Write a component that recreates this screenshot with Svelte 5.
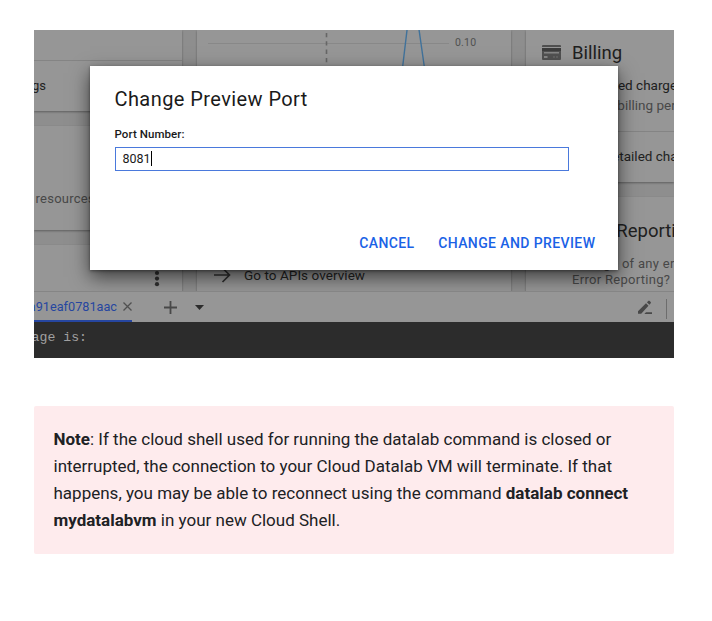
<script>
  let port = '8081';
</script>

<main>
  <section class="shot">
    <div class="dashboard">
      <div class="col left">
        <div class="card c1"><div class="blank"></div><div class="link"><span class="clip settings">Go to project settings</span></div></div>
        <div class="card c2"><span class="resources">resources</span></div>
        <div class="card c3">
          <svg width="6" height="18" viewBox="0 0 6 18" fill="#303030"><circle cx="3" cy="3" r="2.1"/><circle cx="3" cy="8.6" r="2.1"/><circle cx="3" cy="14.2" r="2.1"/></svg>
        </div>
      </div>
      <div class="col middle">
        <div class="card apis">
          <div class="chart">
            <svg width="250" height="60" viewBox="0 0 250 60" fill="none">
              <path d="M0 13.500H241" stroke="#888"/>
              <path d="M118.500 3V50" stroke="#666" stroke-width="1.6" stroke-dasharray="4.3 4"/>
              <path d="M194.500 38L199.500-4M216.500 38L210.500-4" stroke="#40729b" stroke-width="1.4"/>
            </svg>
            <span>0.10</span>
          </div>
          <div class="overview">
            <svg width="17" height="16" viewBox="0 0 17 16" fill="none" stroke="#303030" stroke-width="1.7"><path d="M0 8H15.500M8.500 1L15.500 8L8.500 15"/></svg>
            <span>Go to APIs overview</span>
          </div>
        </div>
      </div>
      <div class="col right">
        <div class="card billing">
          <div class="head">
            <svg width="19" height="16" viewBox="0 0 19 16"><path fill="#505050" d="M0 1Q0 0 1 0H18Q19 0 19 1V2H0z"/><path fill="#3d3d3d" d="M0 3H19V6H0z"/><path fill="#505050" d="M0 6H19V14Q19 15 18 15H1Q0 15 0 14z"/><path fill="#858585" d="M2 7H17V8.500H2zM2 11H5.500V13H2z"/><path fill="#707070" d="M11 11.500H13V12.500H11zM14 11.500H16V12.500H14z"/></svg>
            <h3>Billing</h3>
          </div>
          <p class="dark">Estimated charges</p>
          <p>For the billing period</p>
          <div class="detail">View detailed charges</div>
        </div>
        <div class="card errors">
          <h3>Error Reporting</h3>
          <p>No sign of any errors.</p>
          <p>Error Reporting?</p>
        </div>
      </div>
    </div>

    <div class="tabs">
      <div class="tab">
        <span class="clip name">a91eaf0781aac</span>
        <svg width="9" height="9" viewBox="0 0 9 9" stroke="#505050" stroke-width="1.3"><path d="M.5.5L8.500 8.500M8.500.5L.5 8.500"/></svg>
      </div>
      <svg class="plus" width="13" height="13" viewBox="0 0 13 13" stroke="#484848" stroke-width="1.8"><path d="M6.500 0V13M0 6.500H13"/></svg>
      <svg class="caret" width="9" height="5" viewBox="0 0 9 5" fill="#2c2c2c"><path d="M0 0H9L4.500 5z"/></svg>
      <svg class="pen" width="16" height="15" viewBox="0 0 16 15" fill="#484848"><path d="M1 11.200L9 3.200L11.500 5.700L4.200 13.800H1zM9.900 2.300L11.300.9Q12 .3 12.700 1L13.700 2Q14.300 2.700 13.700 3.300L12.400 4.800zM9 12.300H15V14H7.400z"/></svg>
      <i class="sep"></i>
    </div>
    <div class="terminal"><span class="clip">age is:</span></div>

    <div class="dialog" role="dialog" aria-label="Change Preview Port">
      <h2>Change Preview Port</h2>
      <div class="label">Port Number:</div>
      <div class="input">{port}<i></i></div>
      <div class="actions"><span>CANCEL</span><span>CHANGE AND PREVIEW</span></div>
    </div>
  </section>

  <aside>
    <b>Note</b>: If the cloud shell used for running the datalab command is closed or interrupted, the connection to your Cloud Datalab VM will terminate. If that happens, you may be able to reconnect using the command <b>datalab connect mydatalabvm</b> in your new Cloud Shell.
  </aside>
</main>

<style>
  :global(body) { background: #fff; }
  * { box-sizing: border-box; }
  main { padding: 30px 38px 67px 34px; height: 621px; overflow: hidden; font-family: Roboto, sans-serif; color: #202124; }
  svg { display: block; flex: none; }
  h2, h3, p { margin: 0; font-weight: 400; }
  .shot { position: relative; width: 640px; height: 328px; overflow: hidden; background: #8e8e8e; display: flex; flex-direction: column; }
  .dashboard { height: 261px; display: flex; gap: 15px; overflow: hidden; }
  .col { display: flex; flex-direction: column; gap: 15px; }
  .left { width: 148px; }
  .middle { width: 314px; }
  .right { width: 148px; }
  .card { background: #969696; box-shadow: 0 1px 2px rgba(0, 0, 0, .34); flex: none; overflow: hidden; }
  .clip { display: flex; justify-content: flex-end; white-space: nowrap; overflow: hidden; }
  .c1 { height: 81px; }
  .blank { height: 31px; border-bottom: 1px solid #848484; }
  .link { padding-top: 17px; font-size: 13px; line-height: 16px; color: #222; }
  .settings { width: 12px; }
  .c2 { height: 104px; padding: 64px 0 0 1.500px; font-size: 13px; line-height: 18px; color: #484848; }
  .resources { letter-spacing: .25px; }
  .c3 { height: 60px; padding: 25px 0 0 120px; }
  .apis { height: 280px; display: flex; flex-direction: column; }
  .chart { height: 236px; padding-left: 11px; display: flex; }
  .chart span { margin: 6px 0 0 -3px; font-size: 10.500px; line-height: 14px; letter-spacing: .2px; color: #505050; }
  .overview { display: flex; align-items: center; gap: 13px; padding-left: 17px; height: 18px; font-size: 13.500px; letter-spacing: .06px; color: #222; white-space: nowrap; }
  .billing { height: 152px; }
  .head { display: flex; align-items: center; gap: 11px; padding: 11px 0 0 16px; height: 35px; }
  h3 { font-size: 18.500px; line-height: 24px; color: #202020; white-space: nowrap; }
  .billing p, .errors p { margin-left: 46px; font-size: 13.500px; line-height: 20px; color: #484848; white-space: nowrap; }
  .billing p.dark { margin-top: 10px; color: #202020; }
  .detail { margin-top: 16px; border-top: 1px solid #848484; padding: 15px 0 0 46px; font-size: 13.500px; line-height: 18px; color: #222; white-space: nowrap; }
  .errors { height: 110px; padding-top: 22px; }
  .errors h3 { margin-left: 46px; margin-bottom: 13px; }
  .errors p { font-size: 13px; line-height: 16px; letter-spacing: .3px; }
  .tabs { position: relative; z-index: 3; height: 31px; background: #969696; border-top: 1px solid #858585; display: flex; align-items: center; }
  .tab { width: 98px; height: 30px; border-bottom: 2px solid #2646a0; display: flex; align-items: center; gap: 6px; }
  .name { width: 83px; font-size: 12.700px; color: #2646a0; line-height: 20px; padding-top: 1px; }
  .plus { margin-left: 32px; }
  .caret { margin-left: 17.500px; }
  .pen { margin-left: 433px; }
  .sep { width: 1px; height: 20px; margin-left: 13px; margin-top: 3px; background: #6d6d6d; }
  .terminal { position: relative; z-index: 3; height: 36px; background: #2c2c2c; color: #a0a0a0; font: 13.200px/18px "Liberation Mono", monospace; padding-top: 7px; }
  .terminal .clip { width: 53px; }
  .dialog { position: absolute; z-index: 2; left: 56px; top: 36px; width: 528px; height: 204px; background: #fff; padding: 21px 22.600px 0 24.500px; box-shadow: 0 7px 18px rgba(0, 0, 0, .6), 0 1px 3px rgba(0, 0, 0, .4); color: #1a1a1a; }
  h2 { font-size: 20px; line-height: 24px; letter-spacing: .42px; }
  .label { margin-top: 16px; font-size: 11.500px; line-height: 14px; font-weight: 500; letter-spacing: .08px; }
  .input { margin-top: 6px; width: 454px; height: 24px; border: 1px solid #4a79dc; padding: 0 0 1px 7px; display: flex; align-items: center; font-size: 12.500px; }
  .input i { width: 1px; height: 15px; background: #000; }
  .actions { display: flex; justify-content: flex-end; gap: 23.600px; margin-top: 63px; font-size: 14px; line-height: 18px; font-weight: 500; letter-spacing: .4px; color: #1a62e6; white-space: nowrap; }
  aside { margin-top: 48px; height: 148px; border-radius: 2px; background: #feebed; padding: 20px 30px 0 19.500px; font-size: 17px; line-height: 27px; }
</style>
